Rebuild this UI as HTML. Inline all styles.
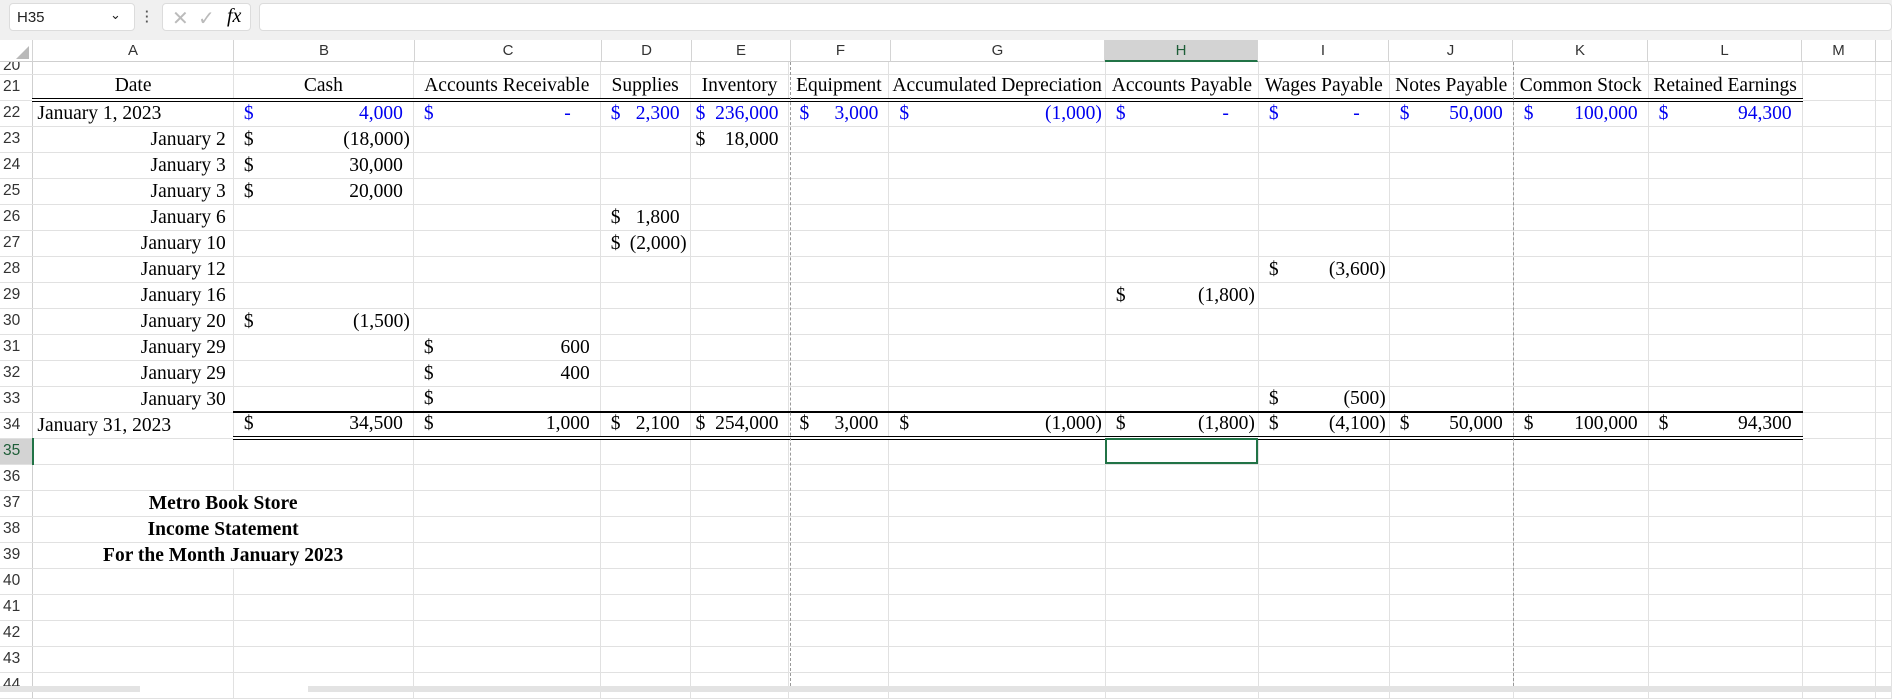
<!DOCTYPE html>
<html><head><meta charset="utf-8"><style>
*{box-sizing:border-box;margin:0;padding:0}
body{width:1892px;height:692px;overflow:hidden;background:#fff;position:relative;font-family:"Liberation Serif",serif}
.top{position:absolute;left:0;top:0;width:1892px;height:40px;background:#f0f0f0}
.nb{position:absolute;left:9px;top:3px;width:126px;height:28px;background:#fff;border:1px solid #dcdcdc;border-radius:4px;font:15px "Liberation Sans",sans-serif;padding:5px 0 0 7px;color:#222}
.fx{position:absolute;left:162px;top:3px;width:89px;height:28px;background:#fff;border:1px solid #dcdcdc;border-radius:4px}
.fi{position:absolute;left:259px;top:3px;width:1633px;height:28px;background:#fff;border:1px solid #dcdcdc;border-radius:4px}
.ch{position:absolute;top:40px;height:22px;border-right:1px solid #d4d4d4;border-bottom:1px solid #cfcfcf;font:15px "Liberation Sans",sans-serif;text-align:center;line-height:21px;color:#333;background:#fff}
table{position:absolute;left:0;top:62px;border-collapse:collapse;table-layout:fixed}
td{border-right:1px solid #e1e1e1;border-bottom:1px solid #e1e1e1;height:26px;font-size:19.5px;white-space:nowrap;overflow:hidden;vertical-align:bottom;line-height:22px;padding:0 3px 1px 10px}
td.rh{font:15.5px "Liberation Sans",sans-serif;color:#333;text-align:left;padding-left:3px;border-right:1px solid #cfcfcf;vertical-align:middle;line-height:20px}
td.A{padding-left:4px;padding-right:7px}
td.E{padding-left:5px}
tr.r20 td{height:12px;line-height:11px}
.a{display:flex;justify-content:space-between}
.p{padding-right:7px}
.d{padding-right:26px}
.b{color:#0000f0}
.hd td.h{text-align:center;border-bottom:4px double #000;padding-left:3px}
.t td.m{border-top:2px solid #000;border-bottom:4px double #000}
.r{text-align:right}
.c{text-align:center;font-weight:bold}
.dash{position:absolute;top:62px;height:624px;width:0;border-left:1px dashed #999}
.sb{position:absolute;top:686px;height:6px;background:#e3e3e3}
</style></head><body>
<div class="top"></div>
<div class="nb">H35<span style="position:absolute;left:100px;top:3px;font-size:13px">&#8964;</span></div>
<div style="position:absolute;left:145px;top:9px;width:3px;height:16px;color:#555;font:bold 13px 'Liberation Sans';line-height:5px">·<br>·<br>·</div>
<div class="fx"><span style="position:absolute;left:9px;top:2px;color:#bbb;font:20px 'Liberation Sans'">✕</span><span style="position:absolute;left:35px;top:2px;color:#bbb;font:20px 'Liberation Sans'">✓</span><span style="position:absolute;left:64px;top:1px;font:italic 20px 'Liberation Serif'">fx</span></div>
<div class="fi"></div>
<div class="ch" style="left:0;width:33px"><svg width="33" height="22"><polygon points="29,6 29,19 16,19" fill="#b9b9b9"/></svg></div>
<div class="ch" style="left:33px;width:201px">A</div>
<div class="ch" style="left:234px;width:181px">B</div>
<div class="ch" style="left:415px;width:187px">C</div>
<div class="ch" style="left:602px;width:90px">D</div>
<div class="ch" style="left:692px;width:99px">E</div>
<div class="ch" style="left:791px;width:100px">F</div>
<div class="ch" style="left:891px;width:214px">G</div>
<div class="ch" style="left:1105px;width:153px;background:#d3d3d3;border-bottom:2px solid #217346;color:#1e5e38">H</div>
<div class="ch" style="left:1258px;width:131px">I</div>
<div class="ch" style="left:1389px;width:124px">J</div>
<div class="ch" style="left:1513px;width:135px">K</div>
<div class="ch" style="left:1648px;width:154px">L</div>
<div class="ch" style="left:1802px;width:74px">M</div>
<div class="ch" style="left:1876px;width:16px"></div>
<table>
<colgroup><col style="width:33px"><col style="width:201px"><col style="width:181px"><col style="width:187px"><col style="width:90px"><col style="width:99px"><col style="width:100px"><col style="width:214px"><col style="width:153px"><col style="width:131px"><col style="width:124px"><col style="width:135px"><col style="width:154px"><col style="width:74px"><col style="width:16px"></colgroup>
<tr class="r20"><td class="rh" style="line-height:8px;vertical-align:top;padding-top:0">20</td><td></td><td></td><td></td><td></td><td></td><td></td><td></td><td></td><td></td><td></td><td></td><td></td><td></td><td></td></tr>
<tr class="hd"><td class="rh">21</td><td class="h">Date</td><td class="h">Cash</td><td class="h">Accounts Receivable</td><td class="h">Supplies</td><td class="h">Inventory</td><td class="h">Equipment</td><td class="h">Accumulated Depreciation</td><td class="h">Accounts Payable</td><td class="h">Wages Payable</td><td class="h">Notes Payable</td><td class="h">Common Stock</td><td class="h">Retained Earnings</td><td></td><td></td></tr>
<tr class="b"><td class="rh">22</td><td class="A" style="color:#000">January 1, 2023</td><td><div class="a"><span>$</span><span class="p">4,000</span></div></td><td><div class="a"><span>$</span><span class="d">-</span></div></td><td><div class="a"><span>$</span><span class="p">2,300</span></div></td><td class="E"><div class="a"><span>$</span><span class="p">236,000</span></div></td><td><div class="a"><span>$</span><span class="p">3,000</span></div></td><td><div class="a"><span>$</span><span>(1,000)</span></div></td><td><div class="a"><span>$</span><span class="d">-</span></div></td><td><div class="a"><span>$</span><span class="d">-</span></div></td><td><div class="a"><span>$</span><span class="p">50,000</span></div></td><td><div class="a"><span>$</span><span class="p">100,000</span></div></td><td><div class="a"><span>$</span><span class="p">94,300</span></div></td><td></td><td></td></tr>
<tr><td class="rh">23</td><td class="A r">January 2</td><td><div class="a"><span>$</span><span>(18,000)</span></div></td><td></td><td></td><td class="E"><div class="a"><span>$</span><span class="p">18,000</span></div></td><td></td><td></td><td></td><td></td><td></td><td></td><td></td><td></td><td></td></tr>
<tr><td class="rh">24</td><td class="A r">January 3</td><td><div class="a"><span>$</span><span class="p">30,000</span></div></td><td></td><td></td><td></td><td></td><td></td><td></td><td></td><td></td><td></td><td></td><td></td><td></td></tr>
<tr><td class="rh">25</td><td class="A r">January 3</td><td><div class="a"><span>$</span><span class="p">20,000</span></div></td><td></td><td></td><td></td><td></td><td></td><td></td><td></td><td></td><td></td><td></td><td></td><td></td></tr>
<tr><td class="rh">26</td><td class="A r">January 6</td><td></td><td></td><td><div class="a"><span>$</span><span class="p">1,800</span></div></td><td></td><td></td><td></td><td></td><td></td><td></td><td></td><td></td><td></td><td></td></tr>
<tr><td class="rh">27</td><td class="A r">January 10</td><td></td><td></td><td><div class="a"><span>$</span><span>(2,000)</span></div></td><td></td><td></td><td></td><td></td><td></td><td></td><td></td><td></td><td></td><td></td></tr>
<tr><td class="rh">28</td><td class="A r">January 12</td><td></td><td></td><td></td><td></td><td></td><td></td><td></td><td><div class="a"><span>$</span><span>(3,600)</span></div></td><td></td><td></td><td></td><td></td><td></td></tr>
<tr><td class="rh">29</td><td class="A r">January 16</td><td></td><td></td><td></td><td></td><td></td><td></td><td><div class="a"><span>$</span><span>(1,800)</span></div></td><td></td><td></td><td></td><td></td><td></td><td></td></tr>
<tr><td class="rh">30</td><td class="A r">January 20</td><td><div class="a"><span>$</span><span>(1,500)</span></div></td><td></td><td></td><td></td><td></td><td></td><td></td><td></td><td></td><td></td><td></td><td></td><td></td></tr>
<tr><td class="rh">31</td><td class="A r">January 29</td><td></td><td><div class="a"><span>$</span><span class="p">600</span></div></td><td></td><td></td><td></td><td></td><td></td><td></td><td></td><td></td><td></td><td></td><td></td></tr>
<tr><td class="rh">32</td><td class="A r">January 29</td><td></td><td><div class="a"><span>$</span><span class="p">400</span></div></td><td></td><td></td><td></td><td></td><td></td><td></td><td></td><td></td><td></td><td></td><td></td></tr>
<tr><td class="rh">33</td><td class="A r">January 30</td><td></td><td><div class="a"><span>$</span><span></span></div></td><td></td><td></td><td></td><td></td><td></td><td><div class="a"><span>$</span><span>(500)</span></div></td><td></td><td></td><td></td><td></td><td></td></tr>
<tr class="t"><td class="rh">34</td><td class="A">January 31, 2023</td><td class="m"><div class="a"><span>$</span><span class="p">34,500</span></div></td><td class="m"><div class="a"><span>$</span><span class="p">1,000</span></div></td><td class="m"><div class="a"><span>$</span><span class="p">2,100</span></div></td><td class="m E"><div class="a"><span>$</span><span class="p">254,000</span></div></td><td class="m"><div class="a"><span>$</span><span class="p">3,000</span></div></td><td class="m"><div class="a"><span>$</span><span>(1,000)</span></div></td><td class="m"><div class="a"><span>$</span><span>(1,800)</span></div></td><td class="m"><div class="a"><span>$</span><span>(4,100)</span></div></td><td class="m"><div class="a"><span>$</span><span class="p">50,000</span></div></td><td class="m"><div class="a"><span>$</span><span class="p">100,000</span></div></td><td class="m"><div class="a"><span>$</span><span class="p">94,300</span></div></td><td></td><td></td></tr>
<tr><td class="rh" style="background:#d3d3d3;border-right:2px solid #217346;color:#1e5e38">35</td><td></td><td></td><td></td><td></td><td></td><td></td><td></td><td style="outline:2px solid #217346;outline-offset:-2px"></td><td></td><td></td><td></td><td></td><td></td><td></td></tr>
<tr><td class="rh">36</td><td></td><td></td><td></td><td></td><td></td><td></td><td></td><td></td><td></td><td></td><td></td><td></td><td></td><td></td></tr>
<tr><td class="rh">37</td><td colspan="2" class="c" style="padding-left:3px">Metro Book Store</td><td></td><td></td><td></td><td></td><td></td><td></td><td></td><td></td><td></td><td></td><td></td><td></td></tr>
<tr><td class="rh">38</td><td colspan="2" class="c" style="padding-left:3px">Income Statement</td><td></td><td></td><td></td><td></td><td></td><td></td><td></td><td></td><td></td><td></td><td></td><td></td></tr>
<tr><td class="rh">39</td><td colspan="2" class="c" style="padding-left:3px">For the Month January 2023</td><td></td><td></td><td></td><td></td><td></td><td></td><td></td><td></td><td></td><td></td><td></td><td></td></tr>
<tr><td class="rh">40</td><td></td><td></td><td></td><td></td><td></td><td></td><td></td><td></td><td></td><td></td><td></td><td></td><td></td><td></td></tr>
<tr><td class="rh">41</td><td></td><td></td><td></td><td></td><td></td><td></td><td></td><td></td><td></td><td></td><td></td><td></td><td></td><td></td></tr>
<tr><td class="rh">42</td><td></td><td></td><td></td><td></td><td></td><td></td><td></td><td></td><td></td><td></td><td></td><td></td><td></td><td></td></tr>
<tr><td class="rh">43</td><td></td><td></td><td></td><td></td><td></td><td></td><td></td><td></td><td></td><td></td><td></td><td></td><td></td><td></td></tr>
<tr><td class="rh">44</td><td></td><td></td><td></td><td></td><td></td><td></td><td></td><td></td><td></td><td></td><td></td><td></td><td></td><td></td></tr>
</table>
<div class="dash" style="left:790px"></div>
<div class="dash" style="left:1513px"></div>
<div class="sb" style="left:0;width:140px"></div>
<div class="sb" style="left:308px;width:1584px"></div>
</body></html>
